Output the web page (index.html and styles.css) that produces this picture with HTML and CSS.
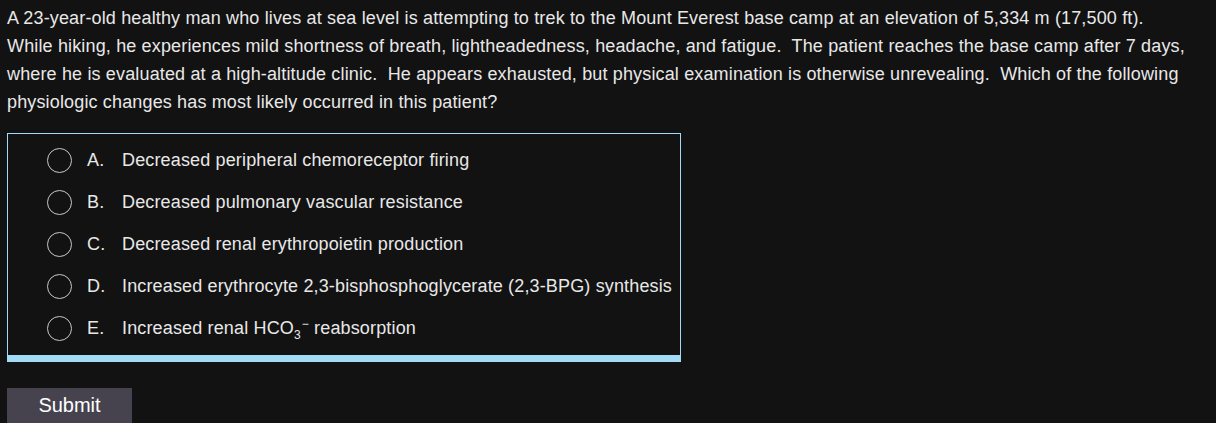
FILE: index.html
```html
<!DOCTYPE html>
<html>
<head>
<meta charset="utf-8">
<link rel="stylesheet" href="styles.css">
</head>
<body>
<div class="page">
  <p class="stem">A 23-year-old healthy man who lives at sea level is attempting to trek to the Mount Everest base camp at an elevation of 5,334 m (17,500 ft). While hiking, he experiences mild shortness of breath, lightheadedness, headache, and fatigue.&nbsp; The patient reaches the base camp after 7 days, where he is evaluated at a high-altitude clinic.&nbsp; He appears exhausted, but physical examination is otherwise unrevealing.&nbsp; Which of the following physiologic changes has most likely occurred in this patient?</p>
  <div class="choices">
    <div class="choice"><span class="radio"></span><span class="letter">A.</span><span class="text">Decreased peripheral chemoreceptor firing</span></div>
    <div class="choice"><span class="radio"></span><span class="letter">B.</span><span class="text">Decreased pulmonary vascular resistance</span></div>
    <div class="choice"><span class="radio"></span><span class="letter">C.</span><span class="text">Decreased renal erythropoietin production</span></div>
    <div class="choice"><span class="radio"></span><span class="letter">D.</span><span class="text">Increased erythrocyte 2,3-bisphosphoglycerate (2,3-BPG) synthesis</span></div>
    <div class="choice"><span class="radio"></span><span class="letter">E.</span><span class="text">Increased renal HCO<sub>3</sub><sup>−</sup> reabsorption</span></div>
  </div>
  <button class="submit">Submit</button>
</div>
</body>
</html>
```
FILE: styles.css
```css
html, body {
  margin: 0;
  padding: 0;
  background: #121212;
}
.page {
  padding: 4px 30px 0 7px;
  font-family: "Liberation Sans", Arial, sans-serif;
  color: #e8e8e8;
  letter-spacing: 0.15px;
}
.stem {
  margin: 0;
  font-size: 18px;
  line-height: 28px;
}
.choices {
  margin-top: 17px;
  width: 672px;
  border: 1px solid #a3dbf7;
  border-bottom: 7px solid #a3dbf7;
  padding: 5px 0 6px 0;
}
.choice {
  display: flex;
  align-items: center;
  height: 42px;
  font-size: 18px;
}
.radio {
  box-sizing: border-box;
  width: 25px;
  height: 25px;
  border: 1.5px solid #c8c8c8;
  border-radius: 50%;
  margin-left: 39px;
  flex: none;
}
.letter {
  margin-left: 15px;
  width: 35px;
}
.text sub {
  font-size: 12px;
  vertical-align: -5px;
  line-height: 0;
}
.text sup {
  font-size: 12px;
  vertical-align: 6px;
  line-height: 0;
  margin-left: 1px;
}
.submit {
  margin-top: 26px;
  width: 125px;
  padding: 6px 0 14px 0;
  line-height: 23px;
  background: #46434f;
  color: #ffffff;
  border: none;
  font-family: "Liberation Sans", Arial, sans-serif;
  font-size: 20px;
  display: block;
}
```
